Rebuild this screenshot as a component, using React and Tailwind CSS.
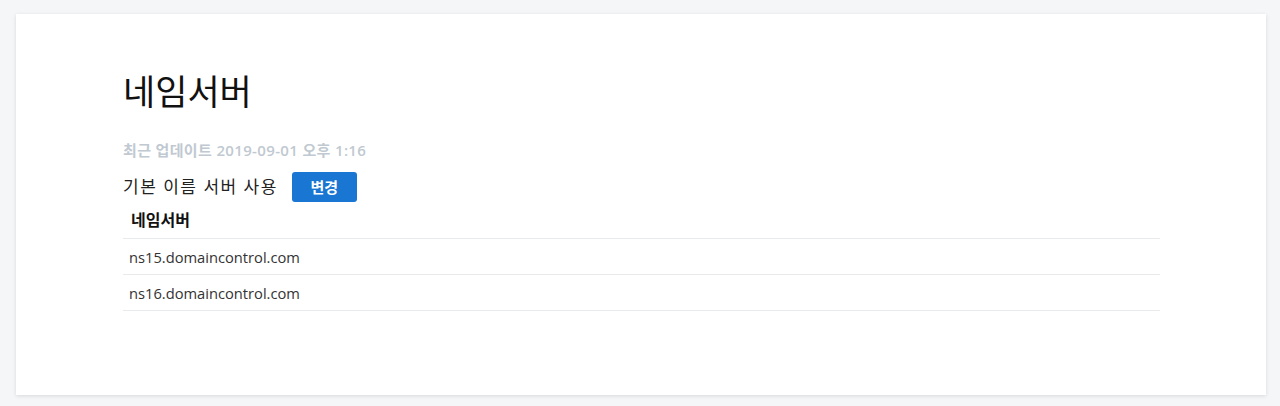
import React from 'react';

const nameservers = ['ns15.domaincontrol.com', 'ns16.domaincontrol.com'];

const font = { fontFamily: '"Open Sans", "Noto Sans CJK KR", sans-serif' };

export default function App() {
  return (
    <div className="min-h-[406px] bg-[#f5f6f8] pt-[14px] pb-[11px] px-[14px]" style={font}>
      <div className="ml-[2px] w-[1250px] h-[381px] bg-white shadow-[0_1px_4px_rgba(0,0,0,0.12)] pl-[107px] pr-[106px] pt-[56px]">
        <h1 className="text-[35px] leading-[44px] text-[#111] font-normal">네임서버</h1>
        <p className="mt-[26px] text-[15px] leading-[20px] font-semibold tracking-[0.35px] text-[#c0c9d1]">
          최근 업데이트 2019-09-01 오후 1:16
        </p>
        <div className="mt-[11px] flex items-center gap-[14px] h-[32px]">
          <span className="text-[17px] text-[#222] tracking-[1.5px]">기본 이름 서버 사용</span>
          <button className="h-[30px] w-[65px] rounded-[3px] bg-[#1976d2] text-white text-[15px] font-bold">
            변경
          </button>
        </div>
        <table className="w-full text-left">
          <thead>
            <tr className="border-b border-[#e8eaec]">
              <th className="px-[8px] h-[35px] text-[16px] font-bold text-[#111]">네임서버</th>
            </tr>
          </thead>
          <tbody>
            {nameservers.map((ns) => (
              <tr key={ns} className="border-b border-[#e8eaec]">
                <td className="px-[6px] h-[36px] pt-[2px] text-[14.7px] text-[#333]">{ns}</td>
              </tr>
            ))}
          </tbody>
        </table>
      </div>
    </div>
  );
}
